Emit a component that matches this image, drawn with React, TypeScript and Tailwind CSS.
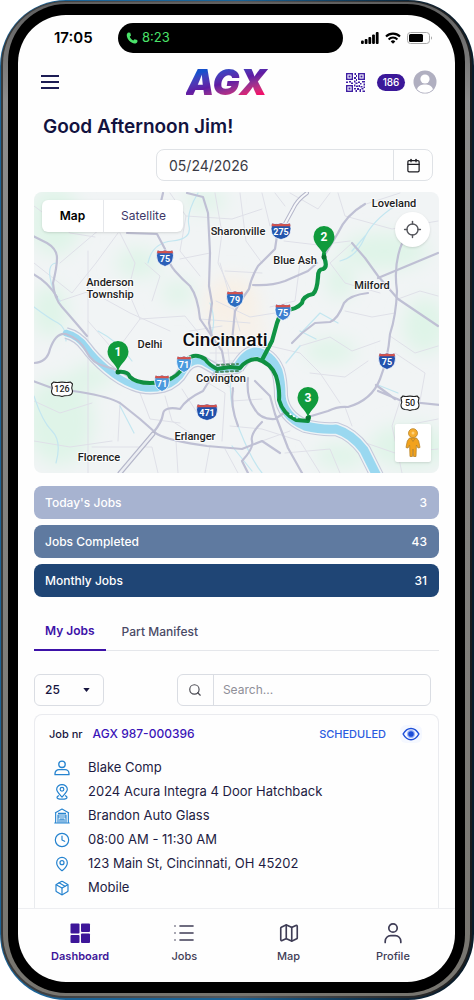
import type { ReactNode } from "react";
import { Calendar, Clock, List, Locate, Map, MapPin, Package, Search } from "lucide-react";

/* ---------- ICONS ---------- */

const PersonIcon = ({ className }: { className?: string }) => (
  <svg viewBox="0 0 24 24" fill="none" stroke="currentColor" strokeWidth="2" strokeLinejoin="round" className={className}>
    <circle cx="12" cy="6.500" r="4.800" />
    <path d="M1.500 22v-1.500a6 6 0 0 1 6-6h9a6 6 0 0 1 6 6V22z" />
  </svg>
);

const ProfileIcon = () => (
  <svg viewBox="0 0 24 24" fill="none" stroke="currentColor" strokeWidth="1.7" strokeLinecap="round" className="size-6">
    <circle cx="12" cy="7" r="4.200" />
    <path d="M4.200 21.500v-1.300a5.600 5.600 0 0 1 5.600-5.600h4.400a5.600 5.600 0 0 1 5.600 5.600v1.300" />
  </svg>
);

const RouteIcon = () => (
  <svg viewBox="0 0 24 24" fill="none" stroke="currentColor" strokeWidth="1.8" strokeLinejoin="round" className="size-4">
    <path d="M12 19.500C7 14 4 11.500 4 8a8 7.200 0 0 1 16 0c0 3.500-3 6-8 11.500z" />
    <circle cx="12" cy="8" r="2.800" />
    <path d="M7.500 17.500c-2 .6-3 1.400-3 2.300 0 1.800 3.400 3 7.500 3s7.500-1.200 7.500-3c0-.9-1-1.700-3-2.300" />
  </svg>
);

const GarageIcon = () => (
  <svg viewBox="0 0 24 24" fill="none" stroke="currentColor" strokeWidth="1.7" strokeLinejoin="round" className="size-4">
    <path d="M1.500 7.500 12 1.500l10.500 6M2.500 7v15.500M21.500 7v15.500M.5 22.500h23" />
    <path d="M6 22V10.500h12V22M6 8h12M6 13.500h12M9 22v-5.500h6V22M12 16.500V22" />
  </svg>
);

const EyeIcon = () => (
  <svg viewBox="0 0 24 24" fill="none" stroke="currentColor" strokeWidth="2" strokeLinejoin="round" className="size-[18px]">
    <path d="M1.500 12S5.500 4.500 12 4.500 22.500 12 22.500 12 18.500 19.500 12 19.500 1.500 12 1.500 12z" />
    <circle cx="12" cy="12" r="4.500" fill="#1d4ed8" stroke="#9db4f5" strokeWidth="1.500" />
  </svg>
);

const DashboardIcon = () => (
  <svg viewBox="0 0 24 24" fill="currentColor" className="size-6">
    <rect x="2.500" y="2.500" width="9" height="10" rx="1" />
    <rect x="13" y="2.500" width="9" height="8.500" rx="1" />
    <rect x="2.500" y="14" width="9" height="8" rx="1" />
    <rect x="13" y="12.500" width="9" height="9.500" rx="1" />
  </svg>
);

const QrIcon = () => (
  <svg viewBox="0 0 19 19" className="size-[19px]" fill="#3f1fa3">
    {[
      [0, 0],
      [12, 0],
      [0, 12],
    ].map(([x, y]) => (
      <g key={`${x}-${y}`}>
        <rect x={x + 0.7} y={y + 0.7} width="5.600" height="5.600" fill="none" stroke="#3f1fa3" strokeWidth="1.400" />
        <rect x={x + 2.5} y={y + 2.5} width="2" height="2" />
      </g>
    ))}
    <path d="M8.500 0h1.500v2H8.500zM10 2h1v2h-1zM8 4h2v2H8zM10 6h1v2h-1zM0 8.500h2V10H0zM3 8h2v1.500H3zM5 9.500h2V11H5zM8 7.500h1.500v2H8zM9.500 9.500h2V11h-2zM12 8.500h2V10h-2zM14 10h1.500v1.500H14zM16 8h3v1.500h-3zM17.500 10.500H19v2h-1.500zM8 11.500h1.500v2H8zM10 12.500h2V14h-2zM12.500 12h1.500v2h-1.500zM14.500 13h2v1.500h-2zM8 15h2v1.500H8zM9.500 17h1.500v2H9.500zM11 15h2v2h-2zM13.500 16h1.500v3h-1.500zM15.500 15h2v1.500h-2zM17.500 13.500H19V15h-1.500zM16.500 17.500H19V19h-2.500z" />
  </svg>
);

const Avatar = () => (
  <svg viewBox="0 0 24 24" className="size-6">
    <circle cx="12" cy="12" r="11.500" fill="#b0afc0" />
    <circle cx="12" cy="9" r="4.600" fill="#fff" />
    <path d="M4 19.200c1.200-3.400 4.300-4.600 8-4.600s6.800 1.200 8 4.600A11 11 0 0 1 12 22.800a11 11 0 0 1-8-3.600z" fill="#fff" />
  </svg>
);

const Pegman = () => (
  <svg viewBox="0 0 18 30" className="h-[30px] w-[18px]" stroke="#b98428" strokeWidth="0.800">
    <path d="M5.500 10h7l2.200 3 1.300 6.500-2 .5-1.600-3-.4 11.500H9.600L9 21l-.6 7.500H6L5.600 17 4 20l-2-.5L3.300 13z" fill="#f2a21c" />
    <circle cx="9" cy="5.200" r="4.500" fill="#f6ac2c" />
    <circle cx="9" cy="5" r="1.500" fill="#fdd27c" stroke="none" />
    <path d="m7 10.500 2 3 2-3" fill="none" />
  </svg>
);

/* ---------- MAP ---------- */

const parks = [
  { cx: 55, cy: 220, rx: 26, ry: 34 },
  { cx: 138, cy: 262, rx: 22, ry: 14 },
  { cx: 178, cy: 292, rx: 16, ry: 12 },
  { cx: 50, cy: 310, rx: 18, ry: 26 },
  { cx: 60, cy: 420, rx: 34, ry: 44 },
  { cx: 92, cy: 375, rx: 22, ry: 12 },
  { cx: 385, cy: 250, rx: 44, ry: 18 },
  { cx: 425, cy: 325, rx: 22, ry: 28 },
  { cx: 330, cy: 350, rx: 26, ry: 12 },
  { cx: 410, cy: 445, rx: 40, ry: 22 },
  { cx: 340, cy: 455, rx: 26, ry: 12 },
  { cx: 340, cy: 280, rx: 14, ry: 18 },
  { cx: 205, cy: 200, rx: 22, ry: 10 },
];

const highways = [
  "M33 235 47 242Q57 248 57 257T53 282Q54 297 62 306T87 335",
  "M33 273Q48 281 57 296",
  "M33 362Q47 362 50 348 56 331 66 333 80 338 86 350T104 365L117 369",
  "M163 192 160 205M127 232 157 233 165 248Q168 262 175 270T190 285Q198 296 200 318L222 350 225 366",
  "M187 192 203 196 208 212 210 252 209 285 212 302 209 322 214 345",
  "M278 228 275 248 258 265Q251 277 249 288L242 298 235 310 232 340",
  "M253 284Q272 285 285 280L308 270 317 262",
  "M365 203Q346 214 338 232L326 252",
  "M352 242 365 257 378 275 398 298 438 325M378 277 438 252",
  "M403 240Q393 262 397 290 396 315 390 333 388 358 380 378 372 399 348 406 338 405 328 410L308 416",
  "M368 292Q350 294 344 302 338 318 330 321L315 322 302 332 292 342",
  "M33 380 52 387 80 391Q110 396 120 402L140 418 157 433Q170 440 207 445L242 448 262 440 280 452",
  "M153 432Q162 421 163 413T180 408Q186 398 203 390L214 372",
  "M233 387Q230 405 238 425",
  "M248 377Q246 396 254 407 260 419 275 418L287 410",
  "M262 421Q250 433 252 440T242 460L248 472",
  "M255 380 270 395 275 413 288 447 302 472",
  "M378 390 402 400 440 404M376 384 395 398",
];

const streets = [
  "M34 205 70 232 95 236M60 262 100 228 118 205M34 262 72 292 96 262 118 232M60 300 90 290 130 312 170 330",
  "M120 232 135 262 128 290 140 318 120 345M88 250 88 320 110 345M140 318 185 315 205 340",
  "M170 192 186 215 180 250 200 275M215 192 222 232 218 262 232 292M186 215 232 218 262 208M180 258 210 252",
  "M225 270 262 272M220 262 240 330M216 300 250 316 275 312M262 192 270 225M240 192 246 240 262 262",
  "M290 192 318 208 330 192M284 240 318 244 350 240M300 262 295 300 270 306M285 205 275 192",
  "M338 192 345 215 392 228 438 220M360 205 400 192M352 242 330 262 345 282 380 292",
  "M398 298 420 290 438 295M345 310 372 316 395 312M300 345 330 336 352 350 380 340M270 345 300 352 320 372",
  "M310 372 345 376 368 360M320 372 340 402M390 335 415 352 438 345M395 352 425 372 420 400",
  "M400 400 392 425 402 472M345 406 352 425M402 425 438 418M360 440 395 452 438 448",
  "M34 400 60 412 92 402M88 320 88 472M34 440 70 446 112 440M92 446 152 446 158 472M176 440 178 472",
  "M120 402 118 440M140 392 150 418 180 422M165 395 172 420 196 436M182 388 196 410M205 380 225 392 222 440",
  "M210 445 205 472M225 448 238 472M232 400 262 398M230 425 262 428 300 440 320 472M262 440 290 430",
  "M285 452 330 448 340 472M145 262 160 275 152 300M190 330 222 325M196 345 240 340M200 318 250 322",
  "M216 345 216 366M222 345 224 366M228 348 230 366M210 352 240 352M206 360 236 360M214 372 234 390",
];

const creeks = [
  "M198 192Q186 212 189 225T172 240 148 262M34 306Q50 318 58 322T66 340M34 395Q42 420 52 430T56 462",
  "M57 262Q48 262 50 276T60 300M210 302Q216 318 212 332M231 380Q228 400 240 430T262 472",
  "M395 205Q372 220 364 238T340 260M352 250 366 234M300 345 286 362M302 331 320 312 338 322",
  "M232 445 252 470M300 330 316 338M120 405 134 432M132 360Q118 340 98 330M378 384 398 392",
];

const RIVER_WEST = "M66 332Q78 335 86 346T107 368 133 384Q147 390 163 386 177 382 184 369 192 357 203 361L217 369 237 367 246 357";
const RIVER_EAST = "M237 367Q246 351 256 351 271 353 278 370 281 380 281 395 283 415 305 425 322 429 336 428 352 433 364 449L377 475";

const rivers = [
  { d: RIVER_WEST, bank: 12, edge: 9.5, water: 6.5 },
  { d: RIVER_EAST, bank: 14, edge: 12, water: 9 },
];

const ROUTE_WEST =
  "M118 371Q128 370 130 376 136 382 150 382T172 377Q182 372 186 359 195 351 205 358 209 364 217 368L230 366 240 367Q247 358 257 358 271 362 276 375 280 388 279 399 283 413 296 419L308 420 309 416";
const ROUTE_NORTH = "M324 253V256Q328 266 323 268 318 268 318 276 317 290 313 293 303 295 302 302 296 309 285 309 280 313 277 322L272 340 262 359";

const towns = [
  { name: "Loveland", x: 394, y: 206 },
  { name: "Sharonville", x: 238, y: 234 },
  { name: "Blue Ash", x: 295, y: 263 },
  { name: "Milford", x: 372, y: 288 },
  { name: "Anderson", x: 110, y: 285 },
  { name: "Township", x: 110, y: 297 },
  { name: "Delhi", x: 150, y: 347 },
  { name: "Covington", x: 221, y: 381 },
  { name: "Erlanger", x: 195, y: 439 },
  { name: "Florence", x: 99, y: 460 },
];

const shields = [
  { n: "75", x: 165, y: 257, w: 17, fill: "#2b5fb8" },
  { n: "275", x: 281, y: 230, w: 20, fill: "#2456ad" },
  { n: "79", x: 235, y: 298, w: 17, fill: "#2b6cc0" },
  { n: "75", x: 283, y: 311, w: 16, fill: "#3d7fd0" },
  { n: "71", x: 184, y: 363, w: 15, fill: "#4a9ade" },
  { n: "71", x: 162, y: 382, w: 15, fill: "#4a9ade" },
  { n: "471", x: 207, y: 411, w: 21, fill: "#2050ab" },
  { n: "75", x: 387, y: 360, w: 17, fill: "#2352ae" },
];

const pins = [
  { n: "1", x: 118, y: 371 },
  { n: "2", x: 324, y: 256 },
  { n: "3", x: 308, y: 417 },
];

function Shield({ n, x, y, w, fill }: { n: string; x: number; y: number; w: number; fill: string }) {
  const h = w / 2;
  return (
    <g transform={`translate(${x} ${y})`}>
      <path
        d={`M${-h + 1} -8Q${-h / 2} -6.500 0 -8 ${h / 2} -6.500 ${h - 1} -8 ${h + 1} -2 ${h - 1} 3 ${h - 3} 7 0 8.500 ${-h + 3} 7 ${-h + 1} 3 ${-h - 1} -2 ${-h + 1} -8z`}
        fill={fill}
        stroke="#fff"
        strokeWidth="0.800"
      />
      <path d={`M${-h + 1} -7.500Q${-h / 2} -6.200 0 -7.500 ${h / 2} -6.200 ${h - 1} -7.500L${h - 0.5} -4.800H${-h + 0.5}z`} fill="#d4524c" />
      <text y="4" textAnchor="middle" fontSize="9" fontWeight="700" fill="#fff">
        {n}
      </text>
    </g>
  );
}

function UsShield({ n, x, y, w }: { n: string; x: number; y: number; w: number }) {
  const h = w / 2;
  return (
    <g transform={`translate(${x} ${y})`}>
      <path
        d={`M${-h + 2} -7Q${-h / 2} -6 0 -7 ${h / 2} -6 ${h - 2} -7L${h} -5Q${h - 1.5} -1 ${h} 2 ${h} 6 ${h - 4} 6.500 2 6.500 0 7.500 -2 6.500 ${-h + 4} 6.500 ${-h} 6 ${-h} 2 ${-h + 1.5} -1 ${-h} -5z`}
        fill="#fff"
        stroke="#222"
        strokeWidth="1.100"
      />
      <text y="3" textAnchor="middle" fontSize="9" fontWeight="500" fill="#1c1c1c">
        {n}
      </text>
    </g>
  );
}

function JobMap() {
  return (
    <div className="relative mt-[11px] overflow-hidden rounded-lg">
      <svg viewBox="34 191 405 281" className="block w-full font-[Roboto,sans-serif]">
        <defs>
          <filter id="soft" x="-50%" y="-50%" width="200%" height="200%">
            <feGaussianBlur stdDeviation="9" />
          </filter>
        </defs>
        <rect x="34" y="191" width="405" height="281" fill="#f1f4f5" />
        <g filter="url(#soft)">
          {parks.map((p, i) => (
            <ellipse key={i} {...p} fill="#dff4e8" />
          ))}
          <ellipse cx="232" cy="305" rx="28" ry="30" fill="#f8f0e6" />
          <ellipse cx="240" cy="330" rx="28" ry="18" fill="#f6f1ea" />
        </g>
        <g fill="none" strokeLinejoin="round" strokeLinecap="round">
          {streets.map((d) => (
            <path key={d} d={d} stroke="#dfe0e8" strokeWidth="1" />
          ))}
          {creeks.map((d) => (
            <path key={d} d={d} stroke="#c3e6f0" strokeWidth="1.200" />
          ))}
          {rivers.map((r) => (
            <path key={r.d} d={r.d} stroke="#c6c9da" strokeWidth={r.bank} strokeLinecap="butt" />
          ))}
          {rivers.map((r) => (
            <path key={r.d} d={r.d} stroke="#eef3f6" strokeWidth={r.edge} strokeLinecap="butt" />
          ))}
          {rivers.map((r) => (
            <path key={r.d} d={r.d} stroke="#9ad8f0" strokeWidth={r.water} />
          ))}
          {highways.map((d) => (
            <path key={d} d={d} stroke="#bfc0d4" strokeWidth="2.200" />
          ))}
          <path d="M307 192Q297 199 293 208L281 230" stroke="#b5b7ca" strokeWidth="4" />
          <path d="M307 192Q297 199 293 208L281 230" stroke="#f7f8fa" strokeWidth="2" />
          <path d="M120 472 153 433" stroke="#b5b7ca" strokeWidth="5" />
          <path d="M120 472 153 433" stroke="#eceef3" strokeWidth="2.500" />
          <path d={ROUTE_WEST} stroke="#0f8f41" strokeWidth="4" />
          <path d={ROUTE_NORTH} stroke="#0f9444" strokeWidth="4.200" />
          <path d="M216 371 238 370M217 364 238 363" stroke="#4f8a63" strokeWidth="2" strokeDasharray="2 3" />
          <path d="M290 413 297 417" stroke="#fff" strokeWidth="1.500" strokeDasharray="1 3" />
        </g>
        <g fill="#1d1d22" stroke="#fff" strokeWidth="2" strokeOpacity="0.800" paintOrder="stroke" strokeLinejoin="round" textAnchor="middle" fontSize="11" fontWeight="500">
          {towns.map((t) => (
            <text key={t.name} x={t.x} y={t.y}>
              {t.name}
            </text>
          ))}
          <text x="225" y="345" fontSize="19" fill="#0c0c10">
            Cincinnati
          </text>
        </g>
        {shields.map((s, i) => (
          <Shield key={i} {...s} />
        ))}
        <UsShield n="126" x={62} y={388} w={21} />
        <UsShield n="50" x={410} y={402} w={18} />
        {pins.map((p) => (
          <g key={p.n} transform={`translate(${p.x} ${p.y})`}>
            <circle r="2.500" fill="#08752f" />
            <path d="M0-1C-2.500-9-10.500-12-10.500-20.500a10.500 10.500 0 0 1 21 0C10.500-12 2.500-9 0-1z" fill="#109a3c" />
            <text y="-16" textAnchor="middle" fontSize="12" fontWeight="700" fill="#fff">
              {p.n}
            </text>
          </g>
        ))}
      </svg>

      <div className="absolute top-2 left-2 flex h-8 overflow-hidden rounded-md bg-white text-[12px] shadow-sm">
        <button className="w-[62px] border-r border-gray-200 font-semibold text-black">Map</button>
        <button className="w-[79px] text-[#3c3768]">Satellite</button>
      </div>
      <button aria-label="Center map" className="absolute top-5 right-[9px] flex size-[35px] items-center justify-center rounded-full bg-white text-[#55565c] shadow-sm">
        <Locate className="size-[19px]" strokeWidth={1.8} />
      </button>
      <button aria-label="Street view" className="absolute right-2 bottom-[11px] flex h-[38px] w-9 items-center justify-center rounded-xs bg-white shadow-sm">
        <Pegman />
      </button>
    </div>
  );
}

/* ---------- PAGE ---------- */

const stats = [
  { label: "Today's Jobs", value: 3, color: "bg-[#a7b3d0]" },
  { label: "Jobs Completed", value: 43, color: "bg-[#5f7aa0]" },
  { label: "Monthly Jobs", value: 31, color: "bg-[#1f4575]" },
];

const details: { icon: ReactNode; text: string }[] = [
  { icon: <PersonIcon className="size-4" />, text: "Blake Comp" },
  { icon: <RouteIcon />, text: "2024 Acura Integra 4 Door Hatchback" },
  { icon: <GarageIcon />, text: "Brandon Auto Glass" },
  { icon: <Clock className="size-4" strokeWidth={1.8} />, text: "08:00 AM - 11:30 AM" },
  { icon: <MapPin className="size-4" strokeWidth={1.8} />, text: "123 Main St, Cincinnati, OH 45202" },
  { icon: <Package className="size-4" strokeWidth={1.8} />, text: "Mobile" },
];

const navItems: { icon: ReactNode; label: string; active?: boolean }[] = [
  { icon: <DashboardIcon />, label: "Dashboard", active: true },
  { icon: <List className="size-6" strokeWidth={1.6} />, label: "Jobs" },
  { icon: <Map className="size-[22px]" strokeWidth={1.8} />, label: "Map" },
  { icon: <ProfileIcon />, label: "Profile" },
];

function StatusBar() {
  return (
    <div className="flex items-center pt-2 pr-[22px] pl-9 text-black">
      <span className="w-16 text-[15px] font-semibold">17:05</span>
      <div className="mr-[18px] flex h-[30px] flex-1 items-center gap-1 rounded-full bg-black pl-2 text-[13px] text-[#4be36a]">
        <svg viewBox="0 0 24 24" fill="currentColor" className="size-3">
          <path d="M5 1 8.500 1.500 10 7 7.500 9.500c1 3 3.500 5.800 7 7.400L17 14.500l5.500 1.500.5 3c-1 3-3 4-5.500 4C9 22 2 14.500 1.500 6.500 1.500 3.500 3 1.500 5 1z" />
        </svg>
        8:23
      </div>
      <div className="flex items-center gap-1.5">
        <svg viewBox="0 0 18 12" fill="currentColor" className="h-3 w-[18px]">
          <rect x="0" y="8.500" width="2.800" height="3.500" rx="1" />
          <rect x="3.700" y="7" width="2.800" height="5" rx="1" />
          <rect x="7.400" y="5" width="2.800" height="7" rx="1" />
          <rect x="11.100" y="2.500" width="2.800" height="9.500" rx="1" />
          <rect x="14.800" y="0" width="2.800" height="12" rx="1" />
        </svg>
        <svg viewBox="0 0 16 12" fill="none" stroke="currentColor" strokeWidth="2.100" className="h-3 w-4">
          <path d="M1 4.500a10 10 0 0 1 14 0M3.600 7.400a6.200 6.200 0 0 1 8.800 0" />
          <path d="M8 11.800 5.700 9.400a3.200 3.200 0 0 1 4.600 0z" fill="currentColor" stroke="none" />
        </svg>
        <svg viewBox="0 0 26 12" className="h-3 w-[26px]">
          <rect x="0.500" y="0.500" width="22" height="11" rx="3" fill="none" stroke="#a8a8a8" />
          <rect x="2" y="2" width="14" height="8" rx="1.500" fill="#000" />
          <path d="M24 4.200v3.600c1.400-.6 1.400-3 0-3.600z" fill="#a8a8a8" />
        </svg>
      </div>
    </div>
  );
}

function Header() {
  return (
    <header className="mt-3 flex h-[34px] items-center pr-[18px] pl-[23px]">
      <button aria-label="Menu" className="text-[#1c1c54]">
        <svg viewBox="0 0 18 14" stroke="currentColor" strokeWidth="2" className="h-3.5 w-[18px]">
          <path d="M0 1h18M0 7h18M0 13h18" />
        </svg>
      </button>
      <div className="flex flex-1 justify-center pl-[52px]">
        <span className="bg-linear-165 from-[#1550cc] from-20% via-[#5f1ba4] via-50% to-[#f0106a] to-85% bg-clip-text pr-1 text-[36px] leading-[34px] font-black text-transparent italic">
          AGX
        </span>
      </div>
      <div className="flex items-center gap-2">
        <button aria-label="Scan code">
          <QrIcon />
        </button>
        <span className="ml-1 flex h-[17px] w-7 items-center justify-center rounded-full bg-[#3b1899] text-[10px] font-medium text-white">186</span>
        <button aria-label="Account">
          <Avatar />
        </button>
      </div>
    </header>
  );
}

function JobCard() {
  return (
    <article className="mt-2 flex-1 rounded-t-lg border border-b-0 border-gray-200/80 px-3.5 pt-[9px] pb-2">
      <div className="flex h-5 items-center text-[12px] font-medium">
        <span className="text-[11px] text-[#17153f]">Job nr</span>
        <a href="#job" className="ml-2.5 text-[#3a14b8]">
          AGX 987-000396
        </a>
        <span className="ml-auto text-[11px] text-[#2b5be0]">SCHEDULED</span>
        <button aria-label="View job" className="mr-0.5 ml-3.5 rounded-md bg-[#f5f8ff] px-0.5 text-[#1d4ed8]">
          <EyeIcon />
        </button>
      </div>
      <ul className="mt-3 text-[13px] text-[#1d1b42]">
        {details.map((d) => (
          <li key={d.text} className="flex h-6 items-center gap-[18px] pl-[5px]">
            <span className="text-[#2583cf]">{d.icon}</span>
            {d.text}
          </li>
        ))}
      </ul>
    </article>
  );
}

export default function App() {
  return (
    <div className="min-h-screen bg-white font-[Inter,sans-serif]">
      {/* PHONE BODY */}
      <div className="flex min-h-screen rounded-[66px] bg-linear-to-r from-[#1c6396] from-50% to-[#0a1c2a] to-95% p-px pr-0.5 pb-0.5">
        <div className="flex flex-1 rounded-[64px] bg-linear-to-r from-[#3a3a3a] via-[#55585c] to-[#1c1c1c] px-0.5 pt-px pb-0.5">
          <div className="flex flex-1 rounded-[62px] bg-linear-to-b from-[#5f5f5f] via-[#8d8d8d] via-10% to-[#77756f] px-[5px] pt-0.5 pb-[3px]">
            <div className="flex flex-1 rounded-[58px] bg-black px-2.5 pt-[11px] pb-[11px]">
              {/* SCREEN */}
              <div className="flex min-w-0 flex-1 flex-col overflow-hidden rounded-[48px] bg-[#fefefe]">
                <StatusBar />
                <Header />
                <main className="flex flex-1 flex-col px-4">
                  <h1 className="mt-[14px] pl-[9px] text-[19px] leading-7 font-semibold text-[#12123f]">Good Afternoon Jim!</h1>

                  <div className="mt-2 mr-1.5 ml-auto flex h-8 w-[277px] max-w-full rounded-lg border border-gray-300/70">
                    <input aria-label="Date" defaultValue="05/24/2026" className="min-w-0 flex-1 pl-3 text-[14px] text-[#3a3a45] outline-none" />
                    <button aria-label="Open calendar" className="flex w-[39px] items-center justify-center border-l border-gray-300/70 text-[#1d1d22]">
                      <Calendar className="size-[15px]" />
                    </button>
                  </div>

                  <JobMap />

                  <div className="mt-[13px] flex flex-col gap-1.5 text-[12px] font-medium text-white">
                    {stats.map((s) => (
                      <div key={s.label} className={`flex h-[33px] items-center justify-between rounded-lg pr-3 pl-[11px] ${s.color}`}>
                        <span>{s.label}</span>
                        <span>{s.value}</span>
                      </div>
                    ))}
                  </div>

                  {/* TABS */}
                  <div role="tablist" className="mt-4 flex border-b border-gray-200 text-[12px] font-medium">
                    <button role="tab" aria-selected="true" className="-mb-px h-[38px] border-b-2 border-[#3d12a8] px-[11px] font-semibold text-[#3d12a8]">
                      My Jobs
                    </button>
                    <button role="tab" aria-selected="false" className="h-[37px] px-4 text-[#4a4a66]">
                      Part Manifest
                    </button>
                  </div>

                  {/* FILTERS */}
                  <div className="mt-[23px] mr-2 flex h-8 justify-between text-[12px]">
                    <div className="relative w-[70px]">
                      <select aria-label="Jobs per page" className="size-full appearance-none rounded-md border border-gray-300/80 pl-2.5 font-medium text-[#17153f]">
                        <option>25</option>
                        <option>50</option>
                      </select>
                      <svg viewBox="0 0 8 5" fill="#17153f" className="pointer-events-none absolute top-3.5 right-3.5 h-1 w-[7px]">
                        <path d="M0 0h8L4 5z" />
                      </svg>
                    </div>
                    <label className="flex w-[64%] rounded-md border border-gray-300/80">
                      <span className="flex w-9 items-center justify-center border-r border-gray-300/80 text-[#4a4a52]">
                        <Search className="size-3.5" />
                      </span>
                      <input aria-label="Search jobs" placeholder="Search..." className="min-w-0 flex-1 pl-[9px] outline-none placeholder:text-[#8f8f98]" />
                    </label>
                  </div>

                  <JobCard />
                </main>

                {/* BOTTOM NAV */}
                <nav className="grid grid-cols-4 border-t border-gray-200/70 px-2.5 pt-3 pb-[17px] text-[11px] font-medium">
                  {navItems.map((n) => (
                    <a key={n.label} href={`#${n.label.toLowerCase()}`} className={`flex flex-col items-center ${n.active ? "font-semibold text-[#3d1699]" : "text-[#3f3d56]"}`}>
                      <span className="flex h-6 items-center">{n.icon}</span>
                      <span className="mt-0.5 leading-[18px]">{n.label}</span>
                    </a>
                  ))}
                </nav>
              </div>
            </div>
          </div>
        </div>
      </div>
    </div>
  );
}
